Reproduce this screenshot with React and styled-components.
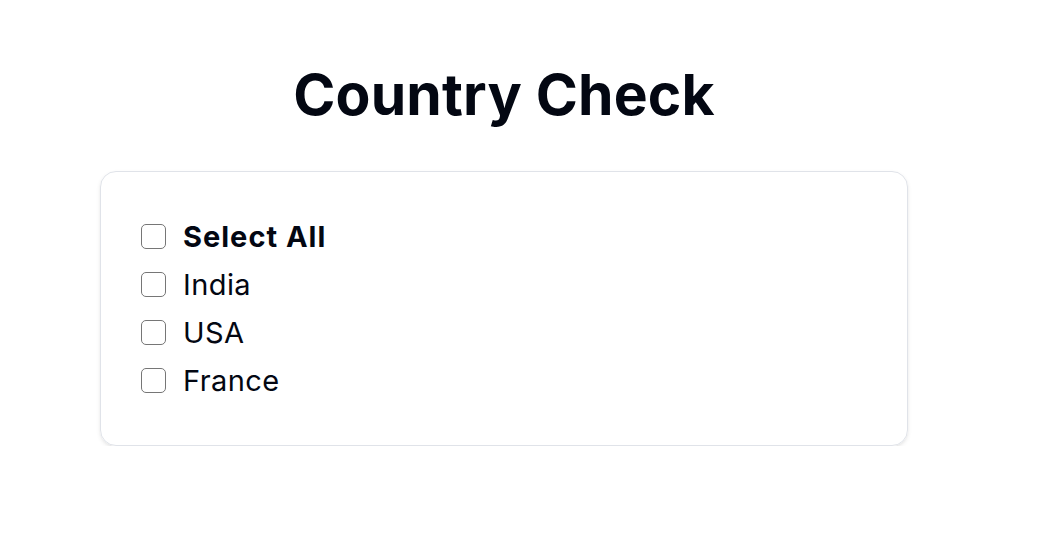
import React, { useState } from 'react';
import styled, { createGlobalStyle } from 'styled-components';

const GlobalStyle = createGlobalStyle`
    body {
        margin: 0;
        background: #fff;
        font-family: Inter, "Noto Sans", sans-serif;
        color: #030712;
    }
`;

const Page = styled.div`
    padding: 61px 0 0 100px;
`;

const Column = styled.div`
    width: 808px;
    display: flex;
    flex-direction: column;
    gap: 43px;
`;

const Title = styled.h1`
    margin: 0;
    text-align: center;
    font-size: 57px;
    line-height: 67px;
    font-weight: 700;
    letter-spacing: 0.2px;
`;

const Card = styled.div`
    border: 1px solid #e0e3e9;
    border-radius: 16px;
    box-shadow: 0 2px 4px rgba(0, 0, 0, 0.08), 0 1px 2px rgba(0, 0, 0, 0.04);
    padding: 40px 40px 41px;
    display: flex;
    flex-direction: column;
`;

const Row = styled.label`
    display: flex;
    align-items: center;
    gap: 17px;
    height: 48px;
    font-size: 29px;
    font-weight: ${props => (props.bold ? 700 : 400)};
    letter-spacing: ${props => (props.bold ? '1px' : '0.4px')};
    cursor: pointer;
`;

const Box = styled.span`
    width: 23px;
    height: 23px;
    border: 1.5px solid #767676;
    border-radius: 5px;
    display: flex;
    align-items: center;
    justify-content: center;
    background: ${props => (props.checked ? '#0a66d8' : '#fff')};
    color: #fff;
    font-size: 16px;
    letter-spacing: 0;
    flex-shrink: 0;
`;

const countries = ['India', 'USA', 'France'];

export default function App() {
    const [checked, setChecked] = useState({});
    const allChecked = countries.every(c => checked[c]);

    const toggle = name => setChecked({ ...checked, [name]: !checked[name] });
    const toggleAll = () => {
        const next = {};
        countries.forEach(c => { next[c] = !allChecked; });
        setChecked(next);
    };

    return (
        <Page>
            <GlobalStyle />
            <Column>
                <Title>Country Check</Title>
                <Card>
                    <Row bold onClick={toggleAll}>
                        <Box checked={allChecked}>{allChecked ? '✓' : ''}</Box>
                        Select All
                    </Row>
                    {countries.map(c => (
                        <Row key={c} onClick={() => toggle(c)}>
                            <Box checked={checked[c]}>{checked[c] ? '✓' : ''}</Box>
                            {c}
                        </Row>
                    ))}
                </Card>
            </Column>
        </Page>
    );
}
